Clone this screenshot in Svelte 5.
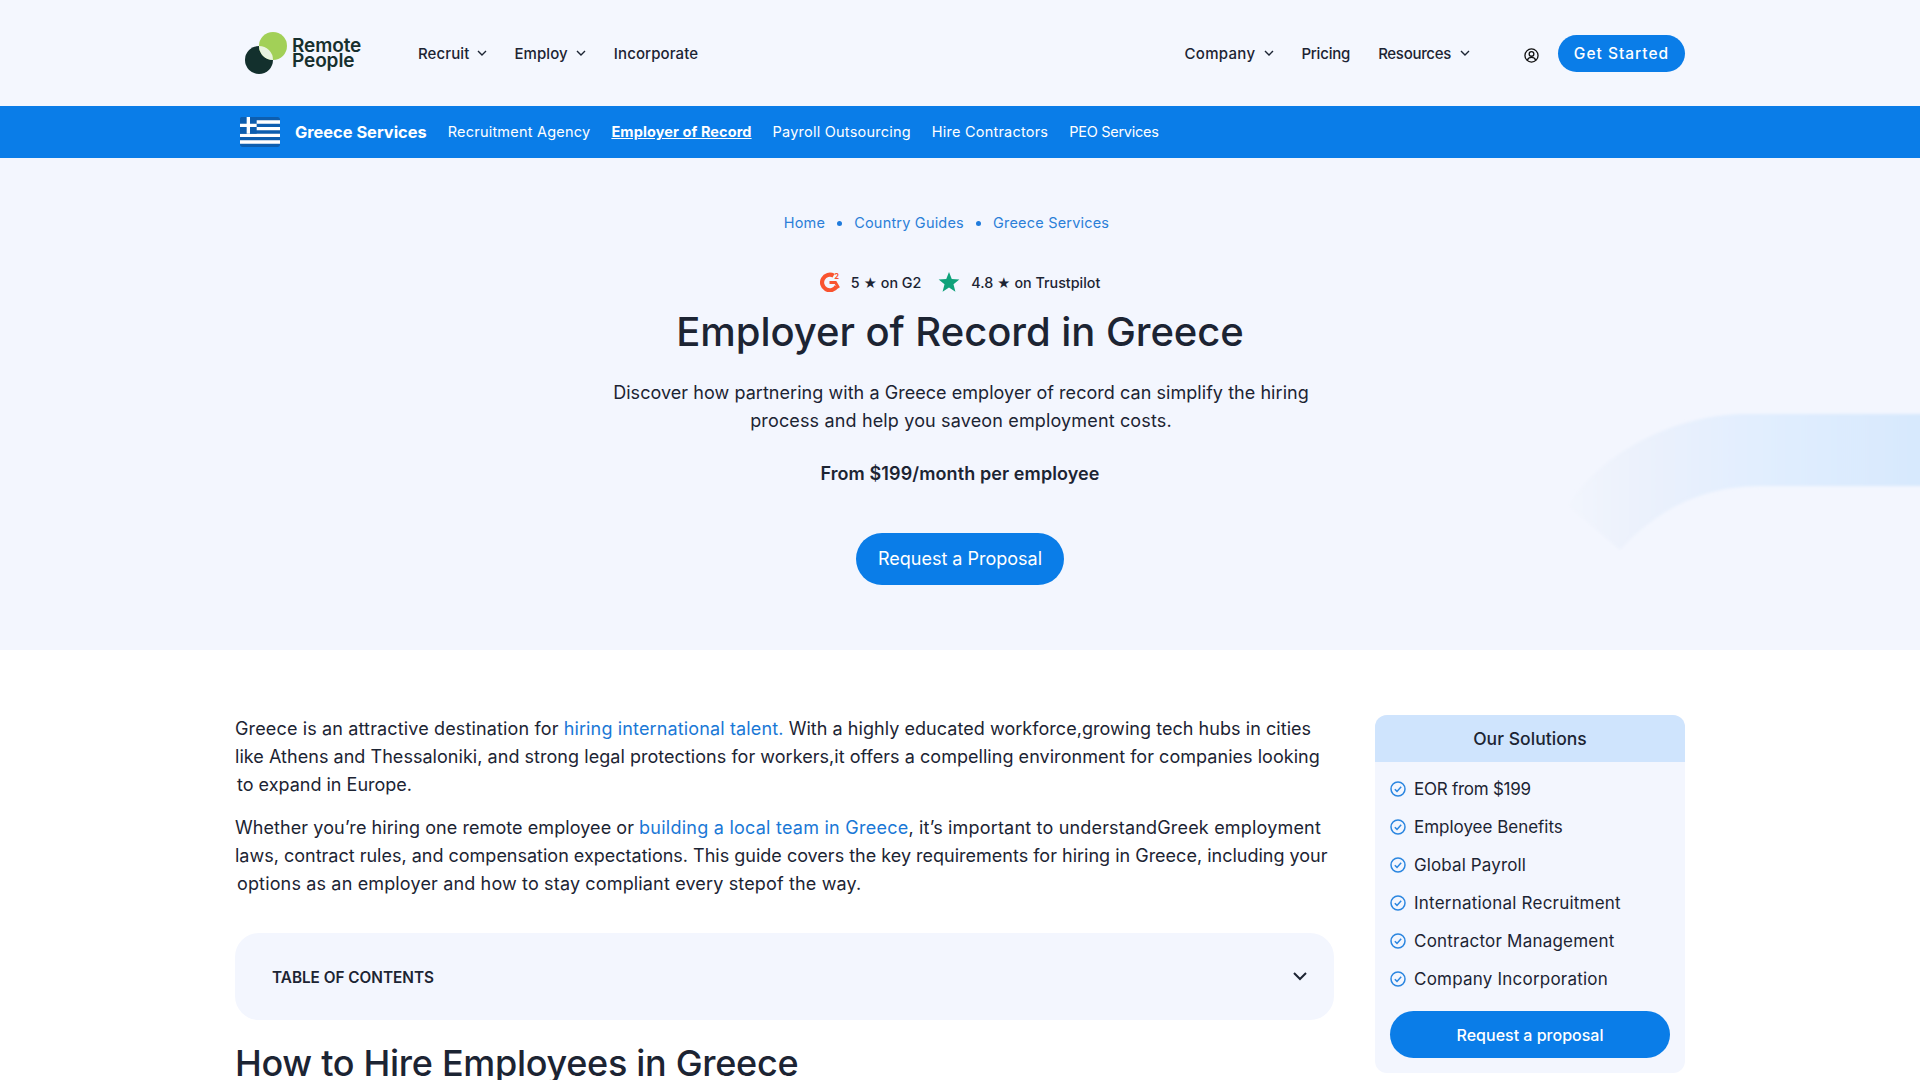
<script>
  const leftNav = [
    { label: 'Recruit', caret: true },
    { label: 'Employ', caret: true },
    { label: 'Incorporate', caret: false }
  ];
  const rightNav = [
    { label: 'Company', caret: true },
    { label: 'Pricing', caret: false },
    { label: 'Resources', caret: true }
  ];
  const subLinks = ['Recruitment Agency', 'Employer of Record', 'Payroll Outsourcing', 'Hire Contractors', 'PEO Services'];
  const solutions = ['EOR from $199', 'Employee Benefits', 'Global Payroll', 'International Recruitment', 'Contractor Management', 'Company Incorporation'];
</script>

{#snippet caret()}
  <svg class="caret" viewBox="0 0 10 6" width="10" height="6"><path d="M1 1l4 4 4-4" fill="none" stroke="#1c2433" stroke-width="1.4" /></svg>
{/snippet}

<div class="page">
  <header class="topbar">
    <div class="wrap topbar-in">
      <div class="logo">
        <svg viewBox="0 0 44 44" width="44" height="44">
          <circle cx="15" cy="29" r="14" fill="#13302d" />
          <circle cx="29" cy="15" r="14" fill="#a2d057" />
          <path d="M15 15A14 14 0 0 1 29 29A14 14 0 0 1 15 15z" fill="#e9f4e0" />
        </svg>
        <span class="logo-text">Remote<br />People</span>
      </div>
      <nav class="nav">
        {#each leftNav as item}
          <span class="nav-item">{item.label}{#if item.caret}{@render caret()}{/if}</span>
        {/each}
      </nav>
      <nav class="nav nav-right">
        {#each rightNav as item}
          <span class="nav-item">{item.label}{#if item.caret}{@render caret()}{/if}</span>
        {/each}
      </nav>
      <svg class="user" viewBox="0 0 16 16" width="15" height="15">
        <circle cx="8" cy="8" r="7" fill="none" stroke="#111" stroke-width="1.4" />
        <circle cx="8" cy="6.3" r="2.5" fill="none" stroke="#111" stroke-width="1.4" />
        <path d="M3.500 13c1-2.500 2.500-3 4.500-3s3.500.5 4.500 3" fill="none" stroke="#111" stroke-width="1.4" />
      </svg>
      <span class="btn btn-start">Get Started</span>
    </div>
  </header>

  <div class="subbar">
    <div class="wrap subbar-in">
      <svg class="flag" viewBox="0 0 40 30" width="40" height="30">
        <rect width="40" height="30" rx="2" fill="#0d5eaf" />
        <path d="M0 5h40M0 11.670h40M0 18.330h40M0 25h40" stroke="#fff" stroke-width="3.33" />
        <rect width="16.670" height="16.670" fill="#0d5eaf" />
        <path d="M8.330 0v16.670M0 8.330h16.670" stroke="#fff" stroke-width="3.33" />
      </svg>
      <span class="sub-title">Greece Services</span>
      {#each subLinks as link, i}
        <span class="sub-link" class:active={i === 1}>{link}</span>
      {/each}
    </div>
  </div>

  <section class="hero">
    <svg class="swoosh" viewBox="0 0 360 160" width="360" height="160">
      <defs>
        <linearGradient id="sw" x1="0" x2="1" y1="0" y2="0">
          <stop offset="0" stop-color="#f2f5fd" />
          <stop offset="0.2" stop-color="#ebf1fc" />
          <stop offset="0.5" stop-color="#e2eefe" />
          <stop offset="1" stop-color="#d6e8fd" />
        </linearGradient>
        <filter id="soft" x="-5%" y="-10%" width="110%" height="120%"><feGaussianBlur stdDeviation="1.6" /></filter>
      </defs>
      <path d="M372 14H185C120 14 42 50 8 106L60 150C95 112 140 86 200 86H372Z" fill="url(#sw)" filter="url(#soft)" />
    </svg>
    <div class="crumbs">
      <span>Home</span><i></i><span>Country Guides</span><i></i><span>Greece Services</span>
    </div>
    <div class="ratings">
      <svg viewBox="0 0 20 20" width="20" height="20">
        <path d="M13.600 3.600A7.800 7.800 0 1 0 16.600 14.400" fill="none" stroke="#f9532f" stroke-width="4.200" />
        <path d="M9.500 10.500h6l3.200 5.500" fill="none" stroke="#f9532f" stroke-width="2.800" />
        <text x="14.200" y="6.500" font-size="7.500" font-weight="700" fill="#f9532f" font-family="Inter, sans-serif">2</text>
      </svg>
      <span class="rate-text">5 <small>★</small> on G2</span>
      <svg class="tp" viewBox="0 0 24 24" width="22" height="22"><path d="M12 1l3 7.700 8.300.5-6.400 5.300 2.100 8.100-7-4.500-7 4.500 2.100-8.100L.7 9.200 9 8.700z" fill="#0fa27a" /></svg>
      <span class="rate-text">4.8 <small>★</small> on Trustpilot</span>
    </div>
    <h1>Employer of Record in Greece</h1>
    <p class="lead">Discover how partnering with a Greece employer of record can simplify the hiring<br /><span class="ls-15">process and help you saveon employment costs.</span></p>
    <p class="price">From $199/month per employee</p>
    <span class="btn btn-hero">Request a Proposal</span>
  </section>

  <main class="wrap content">
    <div class="article">
      <p><span class="ls-14">Greece is an attractive destination for</span>{' '}<a class="ls-14" href="#top">hiring international talent.</a>{' '}<span class="ls-05">With a highly educated workforce,growing tech hubs in cities</span><br /><span class="ls-04">like Athens and Thessaloniki, and strong legal protections for workers,it offers a compelling environment for companies looking</span><br /><span class="nudge">to expand in Europe.</span></p>
      <p><span class="ls-07">Whether you’re hiring one remote employee or</span>{' '}<a class="ls-24" href="#top">building a local team in Greece</a><span class="ls-18">, it’s important to understandGreek employment</span><br />laws, contract rules, and compensation expectations. This guide covers the key requirements for hiring in Greece, including your<br /><span class="nudge ls-15">options as an employer and how to stay compliant every stepof the way.</span></p>
      <div class="toc">
        <span class="toc-label">TABLE OF CONTENTS</span>
        <svg viewBox="0 0 14 9" width="14" height="9"><path d="M1 1l6 6 6-6" fill="none" stroke="#1c2433" stroke-width="2" /></svg>
      </div>
      <h2>How to Hire Employees in Greece</h2>
    </div>
    <aside class="side">
      <div class="side-head">Our Solutions</div>
      <ul>
        {#each solutions as s}
          <li>
            <svg viewBox="0 0 16 16" width="16" height="16">
              <circle cx="8" cy="8" r="7" fill="none" stroke="#2b86e0" stroke-width="1.5" />
              <path d="M4.800 8.200l2.200 2.200 4.200-4.600" fill="none" stroke="#2b86e0" stroke-width="1.5" />
            </svg>
            {s}
          </li>
        {/each}
      </ul>
      <span class="btn btn-side">Request a proposal</span>
    </aside>
  </main>
</div>

<style>
  :global(html), :global(body) {
    overflow: hidden;
  }

  .page {
    height: 1080px;
    overflow: hidden;
    background: #fff;
    color: #1c2433;
    font-family: Inter, "Liberation Sans", sans-serif;
  }

  .wrap {
    width: 1450px;
    margin: 0 auto;
  }

  .topbar {
    height: 106px;
    background: #f4f7fe;
  }

  .topbar-in {
    display: flex;
    align-items: center;
    height: 100%;
  }

  .logo {
    display: flex;
    align-items: center;
    gap: 4px;
    width: 182px;
    padding-left: 9px;
    box-sizing: border-box;
  }

  .logo-text {
    font-size: 19px;
    line-height: 15px;
    font-weight: 600;
    color: #17302e;
    letter-spacing: -0.1px;
  }

  .nav {
    display: flex;
    gap: 27px;
    margin-left: 1px;
  }

  .nav-right {
    margin-left: auto;
  }

  .nav-item {
    display: flex;
    align-items: center;
    gap: 8px;
    font-size: 15px;
    letter-spacing: 0.1px;
    font-weight: 500;
  }

  .nav-item:last-child {
    margin-left: 1px;
  }

  .nav-right .nav-item {
    gap: 9px;
  }

  .nav-right .nav-item:nth-child(1) {
    letter-spacing: 0.3px;
  }

  .nav-right .nav-item:nth-child(2) {
    letter-spacing: -0.2px;
  }

  .nav-right .nav-item:nth-child(3) {
    letter-spacing: -0.3px;
  }

  .user {
    margin: 4px 19px 0 54px;
  }

  .btn {
    display: flex;
    align-items: center;
    justify-content: center;
    background: #0a7de8;
    color: #fff;
    border-radius: 30px;
    font-weight: 500;
  }

  .btn-start {
    width: 127px;
    height: 37px;
    font-size: 15.5px;
    letter-spacing: 1px;
  }

  .subbar {
    height: 52px;
    background: #0a7de8;
    color: #fff;
  }

  .subbar-in {
    display: flex;
    align-items: center;
    gap: 21px;
    height: 100%;
  }

  .flag {
    margin-left: 5px;
    margin-right: -6px;
    border-radius: 2px;
  }

  .sub-title {
    font-size: 16.4px;
    font-weight: 700;
  }

  .sub-link {
    font-size: 14.5px;
    letter-spacing: 0.22px;
    line-height: 18px;
    margin-bottom: 1px;
  }

  .sub-link:last-child {
    letter-spacing: -0.28px;
  }

  .active {
    font-weight: 700;
    letter-spacing: 0.1px;
    text-decoration: underline;
  }

  .hero {
    position: relative;
    height: 492px;
    background: #f3f6fe;
    display: flex;
    flex-direction: column;
    align-items: center;
    overflow: hidden;
  }

  .swoosh {
    position: absolute;
    right: 0;
    top: 242px;
  }

  .crumbs {
    position: relative;
    display: flex;
    align-items: center;
    gap: 12px;
    margin-top: 55px;
    padding-right: 27px;
    line-height: 20px;
    font-size: 14.5px;
    letter-spacing: 0.2px;
    color: #2b7fd8;
  }

  .crumbs i {
    width: 5px;
    height: 5px;
    border-radius: 50%;
    background: #1f7bdc;
  }

  .ratings {
    position: relative;
    display: flex;
    align-items: center;
    gap: 11px;
    margin-top: 37px;
    height: 24px;
    font-size: 14.3px;
    font-weight: 500;
  }

  .rate-text small {
    font-size: 13px;
  }

  .tp {
    margin-left: 6px;
  }

  h1 {
    position: relative;
    margin: 10px 0 0;
    font-size: 40px;
    line-height: 56px;
    font-weight: 500;
    letter-spacing: -0.05px;
  }

  .lead {
    position: relative;
    margin: 19px 0 0;
    padding-left: 2px;
    font-size: 18px;
    line-height: 28px;
    letter-spacing: 0.05px;
    text-align: center;
  }

  .price {
    position: relative;
    margin: 25px 0 0;
    font-size: 18px;
    line-height: 28px;
    font-weight: 600;
    letter-spacing: 0.1px;
  }

  .btn-hero {
    position: relative;
    margin-top: 45px;
    width: 208px;
    height: 52px;
    font-size: 18px;
    font-weight: 400;
    padding-bottom: 2px;
    box-sizing: border-box;
  }

  .content {
    display: flex;
    justify-content: space-between;
    padding-top: 65px;
  }

  .article {
    width: 1099px;
  }

  .article p {
    margin: 0 0 15px;
    font-size: 18px;
    line-height: 28px;
    white-space: nowrap;
  }

  .article a {
    color: #1a78d6;
    text-decoration: none;
  }

  .ls-04 { letter-spacing: 0.04px; }
  .ls-05 { letter-spacing: 0.05px; }
  .ls-07 { letter-spacing: 0.07px; }
  .ls-14 { letter-spacing: 0.14px; }
  .ls-15 { letter-spacing: 0.15px; }
  .ls-18 { letter-spacing: 0.18px; }
  .ls-24 { letter-spacing: 0.24px; }

  .nudge {
    margin-left: 2px;
  }

  .toc {
    display: flex;
    align-items: center;
    justify-content: space-between;
    height: 87px;
    margin-top: 35px;
    padding: 0 27px 0 37px;
    background: #f3f6fe;
    border-radius: 24px;
    font-size: 15.3px;
    font-weight: 600;
  }

  .toc-label {
    margin-top: 2px;
  }

  h2 {
    margin: 19px 0 0;
    font-size: 36px;
    line-height: 48px;
    font-weight: 500;
    letter-spacing: -0.3px;
  }

  .side {
    width: 310px;
    height: 358px;
    background: #f3f6fe;
    border-radius: 12px;
    overflow: hidden;
  }

  .side-head {
    height: 47px;
    background: #cfe4fd;
    display: flex;
    align-items: center;
    justify-content: center;
    padding-bottom: 1px;
    box-sizing: border-box;
    font-size: 17.5px;
    letter-spacing: 0.05px;
    font-weight: 500;
  }

  ul {
    list-style: none;
    margin: 8px 0 13px;
    padding: 0 15px;
  }

  li {
    display: flex;
    align-items: center;
    gap: 8px;
    height: 38px;
    font-size: 17px;
    letter-spacing: 0.22px;
  }

  li:nth-child(1) {
    letter-spacing: -0.25px;
  }

  li:nth-child(2) {
    letter-spacing: -0.02px;
  }

  li:nth-child(3) {
    letter-spacing: 0.12px;
  }

  .btn-side {
    width: 280px;
    height: 47px;
    margin-left: 15px;
    font-size: 16px;
  }
</style>
